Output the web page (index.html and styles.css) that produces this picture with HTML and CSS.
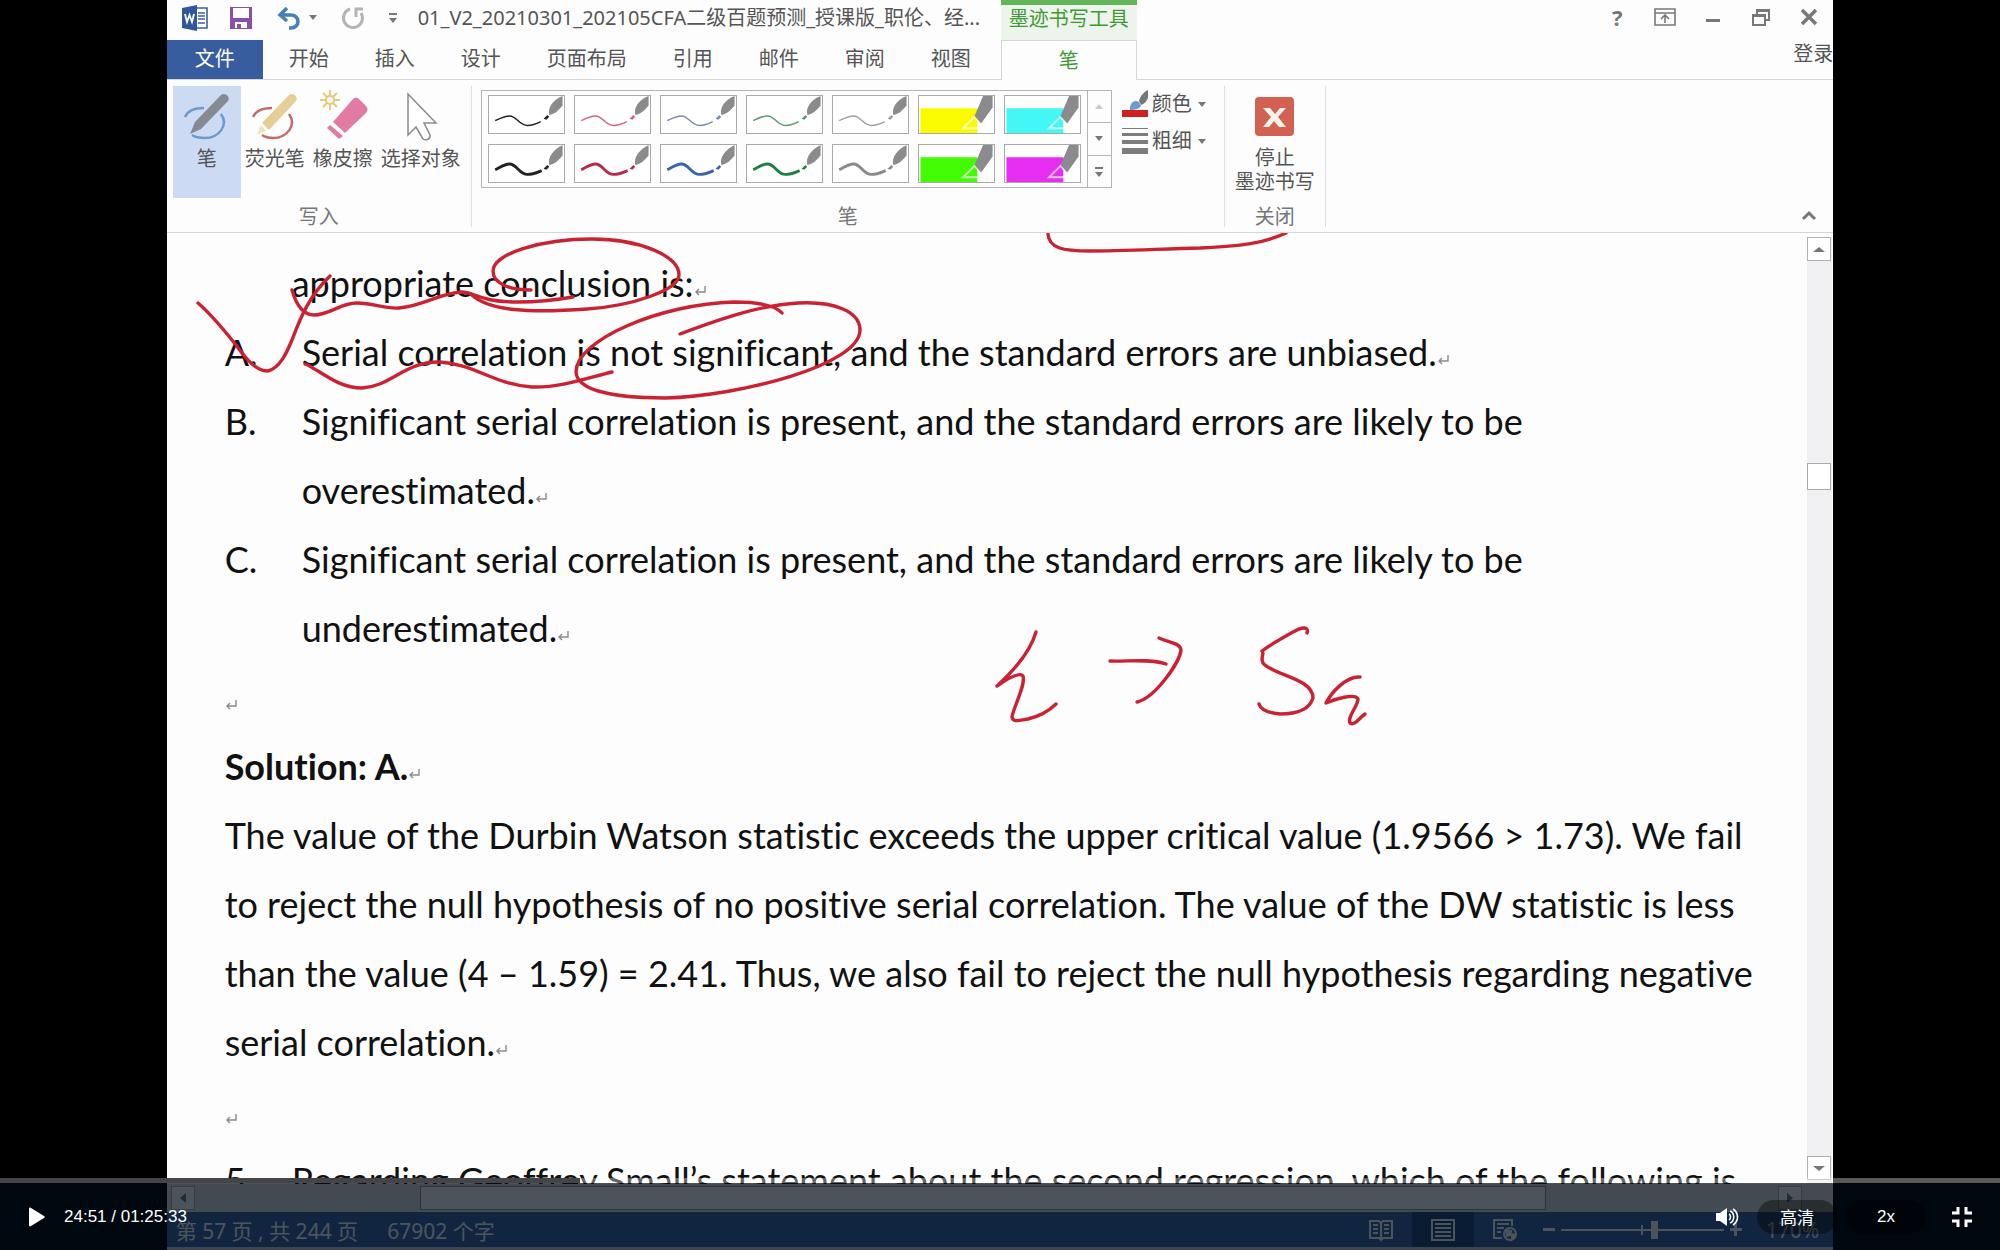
FILE: index.html
```html
<!DOCTYPE html>
<html lang="zh-CN">
  <head>
    <meta charset="UTF-8" />
    <meta name="viewport" content="width=device-width, initial-scale=1.0" />
    <title>01_V2_20210301_202105CFA二级百题预测</title>
    <link rel="stylesheet" href="styles.css" />
  </head>
  <body>
    <!-- shared shapes -->
    <svg class="defs" aria-hidden="true">
      <symbol id="pen-thin" viewBox="0 0 76 39">
        <path d="M5 26C11 23 15 21 20 21C28 21 30 31 39 31C45 31 49 29 53 27" fill="none" stroke="currentColor" stroke-width="1.6" />
        <path d="M56 24l4-4 2 2-3 3z" fill="currentColor" />
        <path d="M62 20C60 12 66 4 76 0V10C72 15 68 19 62 20z" fill="#8b8b8d" />
      </symbol>
      <symbol id="pen-thick" viewBox="0 0 76 39">
        <path d="M5 26C11 23 15 20 20 20C28 20 30 31 39 31C45 31 49 29 54 27" fill="none" stroke="currentColor" stroke-width="3" />
        <path d="M56 25l4-4 2 2-3 3z" fill="currentColor" />
        <path d="M62 21C60 13 66 5 76 0V11C72 16 68 20 62 21z" fill="#8b8b8d" />
      </symbol>
      <symbol id="marker" viewBox="0 0 76 39">
        <path d="M0 13H60V39H0z" fill="currentColor" />
        <path d="M45 34L57 22L64 30L60 34z" fill="none" stroke="#fff" stroke-opacity="0.7" stroke-width="2" />
        <path d="M57 21L66 0H76V12L64 29z" fill="#8b8b8d" />
      </symbol>
      <symbol id="mark" viewBox="0 0 12 12">
        <path d="M11 1V7H2M5 4L2 7L5 10" fill="none" stroke="#8a8a8a" stroke-width="1.4" />
      </symbol>
    </svg>

    <div class="player">
      <main class="video">
        <header class="head">
          <div class="head-left">
            <div class="quick">
              <svg class="word-icon" viewBox="0 0 28 28">
                <path d="M14 4H26V24H14z" fill="#fff" stroke="#3a62a5" stroke-width="1.6" />
                <path d="M17 9h7M17 12h7M17 15h7M17 19h7" stroke="#3a62a5" stroke-width="1.6" />
                <path d="M1 4L16 1V27L1 24z" fill="#2f5799" />
                <path d="M4 10l2 8 2.5-7 2.5 7 2-8" fill="none" stroke="#fff" stroke-width="1.8" />
              </svg>
              <button class="icon-btn save" aria-label="保存">
                <svg viewBox="0 0 24 24">
                  <path d="M1 1H23V23H1z" fill="#8a4fae" />
                  <path d="M4 2H20V12H4zM6 16H18V22H6z" fill="#fff" />
                  <path d="M8 18h4v4H8z" fill="#8a4fae" />
                </svg>
              </button>
              <button class="icon-btn undo" aria-label="撤销">
                <svg viewBox="0 0 24 24">
                  <path d="M3 9H14A7 6.5 0 0 1 14 22H12M10 2L3 9L10 15" fill="none" stroke="#4a7ebb" stroke-width="3.5" />
                </svg>
              </button>
              <span class="caret"></span>
              <button class="icon-btn redo" aria-label="重复">
                <svg viewBox="0 0 24 24">
                  <path d="M9 3A9.5 9.5 0 1 0 20 7M15 11V3H22" fill="none" stroke="#b4b4b4" stroke-width="3" />
                </svg>
              </button>
              <span class="caret more"></span>
              <span class="title">01_V2_20210301_202105CFA二级百题预测_授课版_职伦、经...</span>
            </div>
            <nav class="tabs">
              <button class="file">文件</button>
              <button>开始</button>
              <button>插入</button>
              <button>设计</button>
              <button>页面布局</button>
              <button>引用</button>
              <button>邮件</button>
              <button>审阅</button>
              <button>视图</button>
            </nav>
          </div>
          <div class="context">
            <span class="context-title">墨迹书写工具</span>
            <button class="context-tab">笔</button>
          </div>
          <div class="head-right">
            <div class="window-btns">
              <button class="icon-btn help" aria-label="帮助">?</button>
              <button class="icon-btn" aria-label="功能区显示选项">
                <svg viewBox="0 0 24 24">
                  <path d="M2 4H22V20H2zM2 8H22M12 18V11M8 14L12 10L16 14" fill="none" stroke="#777" stroke-width="1.6" />
                </svg>
              </button>
              <button class="icon-btn" aria-label="最小化">
                <svg viewBox="0 0 24 24"><path d="M5 14H19V17H5z" fill="#777" /></svg>
              </button>
              <button class="icon-btn" aria-label="还原">
                <svg viewBox="0 0 24 24">
                  <path d="M8 9V5H20V15H16M8 6H20M4 10H16V20H4zM4 11H16" fill="none" stroke="#777" stroke-width="2" />
                </svg>
              </button>
              <button class="icon-btn" aria-label="关闭">
                <svg viewBox="0 0 24 24"><path d="M5 5L19 19M19 5L5 19" stroke="#777" stroke-width="3.5" /></svg>
              </button>
            </div>
            <a class="login" href="#">登录</a>
          </div>
        </header>

        <section class="ribbon">
          <div class="group">
            <div class="tools">
              <button class="tool active">
                <svg viewBox="0 0 48 48">
                  <path d="M2 24C5 17 12 15 21 15M38 21C46 32 36 45 22 45C17 45 12 44 9 42" fill="none" stroke="#6a9bd0" stroke-width="2.5" />
                  <path d="M7 41L12 29L38 2C41-1 48 3 45 8L18 36z" fill="#868a91" />
                </svg>
                笔
              </button>
              <button class="tool">
                <svg viewBox="0 0 48 48">
                  <path d="M2 24C5 17 12 15 21 15M38 21C46 32 36 45 22 45C17 45 14 44 11 42" fill="none" stroke="#c76a68" stroke-width="2.5" />
                  <path d="M11 30L38 2C41-1 48 3 45 8L18 37z" fill="#e6cf96" />
                  <path d="M10 32L15 38L6 42z" fill="#efe2bd" />
                </svg>
                荧光笔
              </button>
              <button class="tool">
                <svg viewBox="0 0 48 48">
                  <path d="M11-3V17M1 7H21M4 0L18 14M18 0L4 14" stroke="#ecc879" stroke-width="2" />
                  <circle cx="11" cy="7" r="4" fill="#fff" stroke="#ecc879" stroke-width="2" />
                  <path d="M14 29L34 6C36 4 38 4 40 6L47 13C49 15 49 18 47 20L26 40z" fill="#e07ba3" />
                  <path d="M11 32L24 43L20 46L8 35z" fill="#e07ba3" />
                </svg>
                橡皮擦
              </button>
              <button class="tool">
                <svg viewBox="0 0 48 48">
                  <path d="M11 1V42L19 34L26 46C29 48 34 46 33 42L27 30H39z" fill="#fff" stroke="#8a8a8a" stroke-width="1.5" />
                </svg>
                选择对象
              </button>
            </div>
            <span class="group-name">写入</span>
          </div>

          <div class="group">
            <div class="pens">
              <div class="gallery">
                <div class="cells">
                  <button class="cell black"><svg><use href="#pen-thin" /></svg></button>
                  <button class="cell pink"><svg><use href="#pen-thin" /></svg></button>
                  <button class="cell slate"><svg><use href="#pen-thin" /></svg></button>
                  <button class="cell sage"><svg><use href="#pen-thin" /></svg></button>
                  <button class="cell silver"><svg><use href="#pen-thin" /></svg></button>
                  <button class="cell yellow"><svg><use href="#marker" /></svg></button>
                  <button class="cell cyan"><svg><use href="#marker" /></svg></button>
                  <button class="cell black"><svg><use href="#pen-thick" /></svg></button>
                  <button class="cell red"><svg><use href="#pen-thick" /></svg></button>
                  <button class="cell blue"><svg><use href="#pen-thick" /></svg></button>
                  <button class="cell green"><svg><use href="#pen-thick" /></svg></button>
                  <button class="cell gray"><svg><use href="#pen-thick" /></svg></button>
                  <button class="cell lime"><svg><use href="#marker" /></svg></button>
                  <button class="cell magenta"><svg><use href="#marker" /></svg></button>
                </div>
                <div class="gallery-nav">
                  <button aria-label="上一行"><span class="caret up"></span></button>
                  <button aria-label="下一行"><span class="caret"></span></button>
                  <button aria-label="其他"><span class="caret more"></span></button>
                </div>
              </div>
              <div class="options">
                <button class="option">
                  <svg viewBox="0 0 26 28">
                    <path d="M8 20C7 14 12 9 17 12L19 16C17 19 13 20 8 20z" fill="#6f9bd1" />
                    <path d="M17 11C18 6 22 2 26 0V8C24 12 22 14 19 15z" fill="#777" />
                    <path d="M0 20H26V27H0z" fill="#cf1f1f" />
                  </svg>
                  颜色<span class="caret"></span>
                </button>
                <button class="option">
                  <svg viewBox="0 0 26 28">
                    <path d="M0 1H26V2H0zM0 6H26V9H0zM0 13H26V17H0zM0 21H26V27H0z" fill="#7c7c7e" />
                  </svg>
                  粗细<span class="caret"></span>
                </button>
              </div>
            </div>
            <span class="group-name">笔</span>
          </div>

          <div class="group close-group">
            <button class="stop">
              <svg viewBox="0 0 39 39">
                <rect width="39" height="39" rx="4" fill="#d26151" />
                <path d="M8 11H15L20 17L25 11H31L23 20L31 30H24L19 24L14 30H8L16 20z" fill="#fdf3ee" />
              </svg>
              <span>停止<br />墨迹书写</span>
            </button>
            <span class="group-name">关闭</span>
          </div>
          <button class="icon-btn collapse" aria-label="折叠功能区">
            <svg viewBox="0 0 24 24"><path d="M6 16L12 10L18 16" fill="none" stroke="#777" stroke-width="3" /></svg>
          </button>
        </section>

        <section class="workspace">
          <article class="doc">
            <div class="row question">
              <span></span>
              <p>appropriate conclusion is:<svg class="mark"><use href="#mark" /></svg></p>
            </div>
            <div class="row">
              <span>A.</span>
              <p>Serial correlation is not significant, and the standard errors are unbiased.<svg class="mark"><use href="#mark" /></svg></p>
            </div>
            <div class="row">
              <span>B.</span>
              <p>Significant serial correlation is present, and the standard errors are likely to be<br />overestimated.<svg class="mark"><use href="#mark" /></svg></p>
            </div>
            <div class="row">
              <span>C.</span>
              <p>Significant serial correlation is present, and the standard errors are likely to be<br />underestimated.<svg class="mark"><use href="#mark" /></svg></p>
            </div>
            <p><svg class="mark"><use href="#mark" /></svg></p>
            <p><b>Solution: A.</b><svg class="mark"><use href="#mark" /></svg></p>
            <p>
              The value of the Durbin Watson statistic exceeds the upper critical value (1.9566 &gt; 1.73). We fail<br />
              to reject the null hypothesis of no positive serial correlation. The value of the DW statistic is less<br />
              than the value (4 – 1.59) = 2.41. Thus, we also fail to reject the null hypothesis regarding negative<br />
              serial correlation.<svg class="mark"><use href="#mark" /></svg>
            </p>
            <p><svg class="mark"><use href="#mark" /></svg></p>
            <div class="row question">
              <span>5.</span>
              <p>Regarding Geoffrey Small’s statement about the second regression, which of the following is</p>
            </div>

            <!-- handwriting -->
            <svg class="ink" viewBox="167 233 1640 952">
              <path d="M1048 234C1049 248 1062 251 1090 251C1120 251 1160 249 1200 248C1240 246 1262 244 1286 233" />
              <path d="M198 303C213 316 224 330 236 345C246 359 256 371 268 371C280 368 287 352 292 340C301 316 310 295 330 276" />
              <path d="M292 290C296 304 302 315 314 315C330 315 340 303 357 303C374 303 383 309 399 308C424 306 440 293 461 292C476 292 478 302 518 302C537 302 556 300 573 297" />
              <path d="M531 290C508 290 493 283 493 271C493 254 540 239 592 239C640 239 679 256 679 275C679 290 632 306 587 309C530 313 489 311 472 295" />
              <path d="M305 364C308 364 310 367 318 371C332 380 345 388 362 388C390 387 405 361 440 362C475 364 495 385 532 387C560 388 587 378 612 372" />
              <path d="M782 313C775 305 758 302 734 302C660 304 576 340 576 372C577 390 612 398 665 398C740 396 860 365 860 330C860 312 835 301 798 303C760 305 720 319 680 334" />
              <path d="M1036 632C1032 646 1020 665 997 686C1010 677 1020 672 1023 676C1026 684 1014 706 1012 717C1013 723 1020 720 1028 719C1040 716 1048 712 1056 704" />
              <path d="M1110 661C1125 662 1148 658 1166 664M1159 638C1170 643 1180 643 1181 650C1180 662 1155 698 1137 702" />
              <path d="M1307 633C1309 627 1303 626 1293 632C1284 637 1270 645 1262 651C1265 653 1260 657 1263 663C1272 675 1313 678 1313 698C1309 711 1294 714 1280 714C1270 713 1261 711 1259 704" />
              <path d="M1360 677C1346 676 1331 693 1326 703C1335 699 1355 693 1358 699C1358 706 1347 717 1350 723C1355 726 1358 719 1365 714" />
            </svg>
          </article>
          <div class="vscroll">
            <button aria-label="向上滚动"><span class="caret up"></span></button>
            <span class="thumb"></span>
            <button aria-label="向下滚动"><span class="caret"></span></button>
          </div>
        </section>

        <div class="hscroll">
          <button aria-label="向左滚动"><span class="caret left"></span></button>
          <span class="thumb"></span>
          <button aria-label="向右滚动"><span class="caret right"></span></button>
        </div>

        <footer class="status">
          <span>第 57 页 , 共 244 页</span>
          <span>67902 个字</span>
          <div class="views">
            <button aria-label="阅读视图">
              <svg viewBox="0 0 24 24"><path d="M1 3H10L12 5L14 3H23V20H14L12 22L10 20H1zM12 5V22M4 7H9M4 11H9M4 15H9M15 7H20M15 11H20M15 15H20" /></svg>
            </button>
            <button class="current" aria-label="页面视图">
              <svg viewBox="0 0 24 24"><path d="M1 2H23V22H1zM4 6H20M4 10H20M4 14H20M4 18H20" /></svg>
            </button>
            <button aria-label="Web 版式">
              <svg viewBox="0 0 24 24">
                <path d="M9 20H1V2H19V8M4 6H16M4 10H11M4 14H8" />
                <circle cx="17" cy="16" r="6" />
                <path class="land" d="M13 12L18 13L17 17L14 18zM19 16L22 17L19 21z" />
              </svg>
            </button>
          </div>
          <div class="zoom">
            <span class="minus"></span>
            <input type="range" min="0" max="100" value="58" aria-label="缩放级别" />
            <span class="plus"></span>
          </div>
          <span class="percent">170%</span>
        </footer>
      </main>

      <div class="controls">
        <div class="progress"><div class="played" style="width: 29%"></div></div>
        <div class="bar">
          <button class="play" aria-label="播放">
            <svg viewBox="0 0 18 20"><path d="M1 2C1 1 2 0 3 1L16 9C17 10 17 10 16 11L3 19C2 20 1 19 1 18z" fill="#fff" /></svg>
          </button>
          <span class="time">24:51 / 01:25:33</span>
          <button class="volume" aria-label="音量">
            <svg viewBox="0 0 22 18">
              <path d="M0 5H4L11 0V18L4 13H0z" fill="#fff" />
              <path d="M13 6C15 7 15 11 13 12M14 3C19 5 19 13 14 15M17 1C23 5 23 13 17 17" fill="none" stroke="#fff" stroke-width="1.6" />
            </svg>
          </button>
          <button class="pill">高清</button>
          <button class="pill">2x</button>
          <button class="exit" aria-label="退出全屏">
            <svg viewBox="0 0 22 22"><path d="M1 7H7V1M15 1V7H21M21 15H15V21M7 21V15H1" fill="none" stroke="#fff" stroke-width="3" /></svg>
          </button>
        </div>
      </div>
    </div>
  </body>
</html>
```

FILE: styles.css
```css
* {
  box-sizing: border-box;
}

body {
  margin: 0;
  background: #000;
  font-family: "Noto Sans", "Noto Sans CJK SC", sans-serif;
  font-size: 20px;
  color: #555;
}

button {
  padding: 0;
  border: 0;
  background: none;
  font: inherit;
  color: inherit;
  cursor: pointer;
}

svg {
  display: block;
  overflow: visible;
}

.defs {
  position: absolute;
  width: 0;
  height: 0;
}

.player {
  position: relative;
  height: 100vh;
  overflow: hidden;
  background: #000;
}

.video {
  display: flex;
  flex-direction: column;
  height: 100%;
  aspect-ratio: 4 / 3;
  margin: 0 auto;
  overflow: hidden;
  background: #fdfdfe;
}

/* title bar and tabs */
.head {
  display: flex;
  height: 80px;
  line-height: 30px;
}

.head-left,
.head-right {
  display: flex;
  flex-direction: column;
  border-bottom: 1px solid #d5d6d8;
}

.head-left {
  padding-right: 7px;
}

.quick {
  display: flex;
  align-items: center;
  height: 40px;
  padding: 0 0 4px 14px;
}

.icon-btn {
  width: 24px;
  height: 24px;
}

.word-icon {
  width: 28px;
  height: 28px;
  margin-right: 20px;
}

.save {
  margin-right: 24px;
}

.undo {
  margin-right: 8px;
}

.redo {
  margin: 0 24px;
}

.title {
  margin-left: 21px;
  white-space: nowrap;
}

.caret {
  display: inline-block;
  border: 4px solid transparent;
  border-top: 5px solid #777;
  border-bottom: 0;
}

.caret.up {
  border-top: 0;
  border-bottom: 5px solid #777;
}

.caret.left {
  border: 5px solid transparent;
  border-right: 6px solid #777;
  border-left: 0;
}

.caret.right {
  border: 5px solid transparent;
  border-left: 6px solid #777;
  border-right: 0;
}

.caret.more {
  position: relative;
  margin-top: 6px;
}

.caret.more::before {
  content: "";
  position: absolute;
  left: -4px;
  top: -10px;
  width: 8px;
  height: 2px;
  background: #777;
}

.tabs {
  display: flex;
  height: 40px;
}

.tabs button {
  padding: 0 23px;
}

.tabs .file {
  width: 96px;
  margin-right: 3px;
  padding: 0;
  background: #385d9e;
  color: #fff;
}

.context {
  display: flex;
  flex-direction: column;
  width: 136px;
  text-align: center;
  color: #3f9a35;
}

.context-title {
  height: 40px;
  border-top: 5px solid #62b558;
  background: #ecf4eb;
  line-height: 28px;
}

.context-tab {
  flex: 1;
  border: 1px solid #d5d6d8;
  border-bottom: 0;
}

.head-right {
  flex: 1;
  align-items: flex-end;
  min-width: 0;
}

.window-btns {
  display: flex;
  gap: 24px;
  padding: 5px 12px 0 0;
}

.help {
  font-size: 22px;
  font-weight: bold;
  line-height: 24px;
  color: #777;
}

.login {
  margin-top: 10px;
  color: inherit;
  text-decoration: none;
}

/* ribbon */
.ribbon {
  display: flex;
  height: 153px;
  padding: 6px 0 5px;
  border-bottom: 1px solid #d5d6d8;
  line-height: 24px;
}

.group {
  display: flex;
  flex-direction: column;
  justify-content: space-between;
  padding: 0 6px;
  border-right: 1px solid #dfe0e3;
}

.group-name {
  height: 20px;
  text-align: center;
  line-height: 20px;
  color: #777;
}

.tools {
  display: flex;
  height: 112px;
}

.tool {
  display: flex;
  flex-direction: column;
  align-items: center;
  gap: 6px;
  padding: 7px 4px 0;
}

.tool svg {
  width: 48px;
  height: 48px;
}

.tool.active {
  width: 68px;
  background: #cddaf3;
}

.pens {
  display: flex;
  padding: 4px 12px 0 3px;
}

.gallery {
  display: flex;
  border: 1px solid #b5b5b8;
}

.cells {
  display: grid;
  grid-template-columns: repeat(7, 77px);
  gap: 10px 9px;
  padding: 4px 6px;
}

.cell {
  height: 39px;
  border: 1px solid #a9a9ab;
  background: #fff;
}

.cell svg {
  width: 75px;
  height: 37px;
}

.black { color: #222; }
.pink { color: #d2647c; }
.slate { color: #7c8cad; }
.sage { color: #5c9b76; }
.silver { color: #a0a0a2; }
.red { color: #b82a4a; }
.blue { color: #3c64a8; }
.green { color: #1f8045; }
.gray { color: #8a8a8c; }
.yellow { color: #fbfb00; }
.cyan { color: #42f7f5; }
.lime { color: #42fb04; }
.magenta { color: #e62df2; }

.gallery-nav {
  display: flex;
  flex-direction: column;
  width: 24px;
  border-left: 1px solid #b5b5b8;
}

.gallery-nav button {
  display: flex;
  flex: 1;
  align-items: center;
  justify-content: center;
}

.gallery-nav button + button {
  border-top: 1px solid #b5b5b8;
}

.gallery-nav .up {
  border-bottom-color: #ccc;
}

.options {
  display: flex;
  flex-direction: column;
  gap: 9px;
  margin-left: 10px;
}

.option {
  display: flex;
  align-items: center;
  gap: 4px;
  height: 28px;
}

.option svg {
  width: 26px;
  height: 28px;
}

.option .caret {
  margin-left: 2px;
}

.close-group {
  width: 101px;
}

.stop {
  display: flex;
  flex-direction: column;
  align-items: center;
  gap: 10px;
  padding-top: 11px;
  white-space: nowrap;
}

.stop svg {
  width: 39px;
  height: 39px;
}

.collapse {
  align-self: flex-end;
  margin: 0 12px 0 auto;
}

/* document */
.workspace {
  display: flex;
  flex: 1;
  min-height: 0;
}

.doc {
  position: relative;
  flex: 1;
  min-width: 0;
  padding: 16px 0 0 58px;
  overflow: hidden;
  font-family: Lato, sans-serif;
  font-size: 36px;
  font-variant-ligatures: none;
  line-height: 69px;
  white-space: nowrap;
  color: #111;
}

.doc p {
  margin: 0;
}

.row {
  display: grid;
  grid-template-columns: 77px 1fr;
}

.question {
  grid-template-columns: 67px 1fr;
}

.mark {
  display: inline-block;
  width: 12px;
  height: 12px;
}

.ink {
  position: absolute;
  left: 0;
  top: 0;
  width: 1640px;
  height: 952px;
  fill: none;
  stroke: #cb2231;
  stroke-width: 3.4;
  stroke-linecap: round;
  stroke-linejoin: round;
}

.vscroll {
  display: flex;
  flex-direction: column;
  width: 25px;
  margin: 4px 1px 0 0;
  background: #f0f0f2;
}

.vscroll button,
.hscroll button {
  display: flex;
  align-items: center;
  justify-content: center;
  width: 24px;
  height: 24px;
  border: 1px solid #b0b0b3;
  background: #fff;
}

.vscroll .caret {
  border-left-width: 6px;
  border-right-width: 6px;
}

.vscroll .thumb {
  width: 24px;
  height: 27px;
  margin: 202px 0 auto;
  border: 1px solid #a9a9ac;
  background: #fff;
}

.vscroll button:last-child {
  margin-bottom: 4px;
}

.hscroll {
  display: flex;
  align-items: center;
  height: 28px;
  padding: 0 31px 0 4px;
  background: #dedfe2;
}

.hscroll .thumb {
  width: 1126px;
  height: 24px;
  margin: 0 auto 0 225px;
  border: 1px solid #8e8e92;
  background: #fff;
}

/* status bar */
.status {
  display: flex;
  align-items: center;
  height: 38px;
  padding: 0 14px 0 9px;
  border-bottom: 3px solid #c8cdd4;
  background: #3a62a5;
  font-size: 21px;
  color: #fff;
}

.status > span {
  margin-right: 29px;
}

.views {
  display: flex;
  align-self: stretch;
  margin-left: auto;
}

.views button {
  display: flex;
  align-items: center;
  justify-content: center;
  width: 62px;
}

.views .current {
  background: #23427c;
}

.views svg {
  width: 24px;
  height: 24px;
  fill: none;
  stroke: #fff;
  stroke-width: 2;
}

.views .land {
  fill: #fff;
}

.zoom {
  display: flex;
  align-items: center;
  gap: 6px;
  margin: 0 24px 0 7px;
}

.minus,
.plus {
  width: 12px;
  height: 3px;
  background: #fff;
}

.plus {
  position: relative;
}

.plus::after {
  content: "";
  position: absolute;
  left: 4px;
  top: -5px;
  width: 3px;
  height: 13px;
  background: #fff;
}

.zoom input {
  width: 163px;
  height: 20px;
  margin: 0;
  appearance: none;
  background: linear-gradient(#fff, #fff) center / 100% 2px no-repeat,
    linear-gradient(#fff, #fff) center / 2px 10px no-repeat;
}

.zoom input::-webkit-slider-thumb {
  appearance: none;
  width: 7px;
  height: 18px;
  background: #fff;
}

.status > .percent {
  margin-right: 0;
}

/* player controls over the video */
.controls {
  position: absolute;
  left: 0;
  right: 0;
  bottom: 0;
  font-family: "Liberation Sans", "Noto Sans CJK SC", sans-serif;
  color: #fff;
}

.progress {
  height: 5px;
  background: rgba(255, 255, 255, 0.35);
}

.played {
  height: 100%;
  background: #454547;
}

.bar {
  display: flex;
  align-items: center;
  height: 67px;
  padding: 0 27px 0 28px;
  background: rgba(0, 12, 22, 0.7);
}

.play svg {
  width: 18px;
  height: 20px;
}

.time {
  margin-left: 18px;
  font-size: 17px;
}

.volume {
  margin-left: auto;
}

.volume svg {
  width: 22px;
  height: 18px;
}

.pill {
  width: 80px;
  height: 34px;
  margin-left: 19px;
  border-radius: 17px;
  background: rgba(0, 0, 0, 0.4);
  font-size: 17px;
}

.pill + .pill {
  margin-left: 9px;
}

.exit {
  margin-left: 25px;
}

.exit svg {
  width: 22px;
  height: 22px;
}
```
